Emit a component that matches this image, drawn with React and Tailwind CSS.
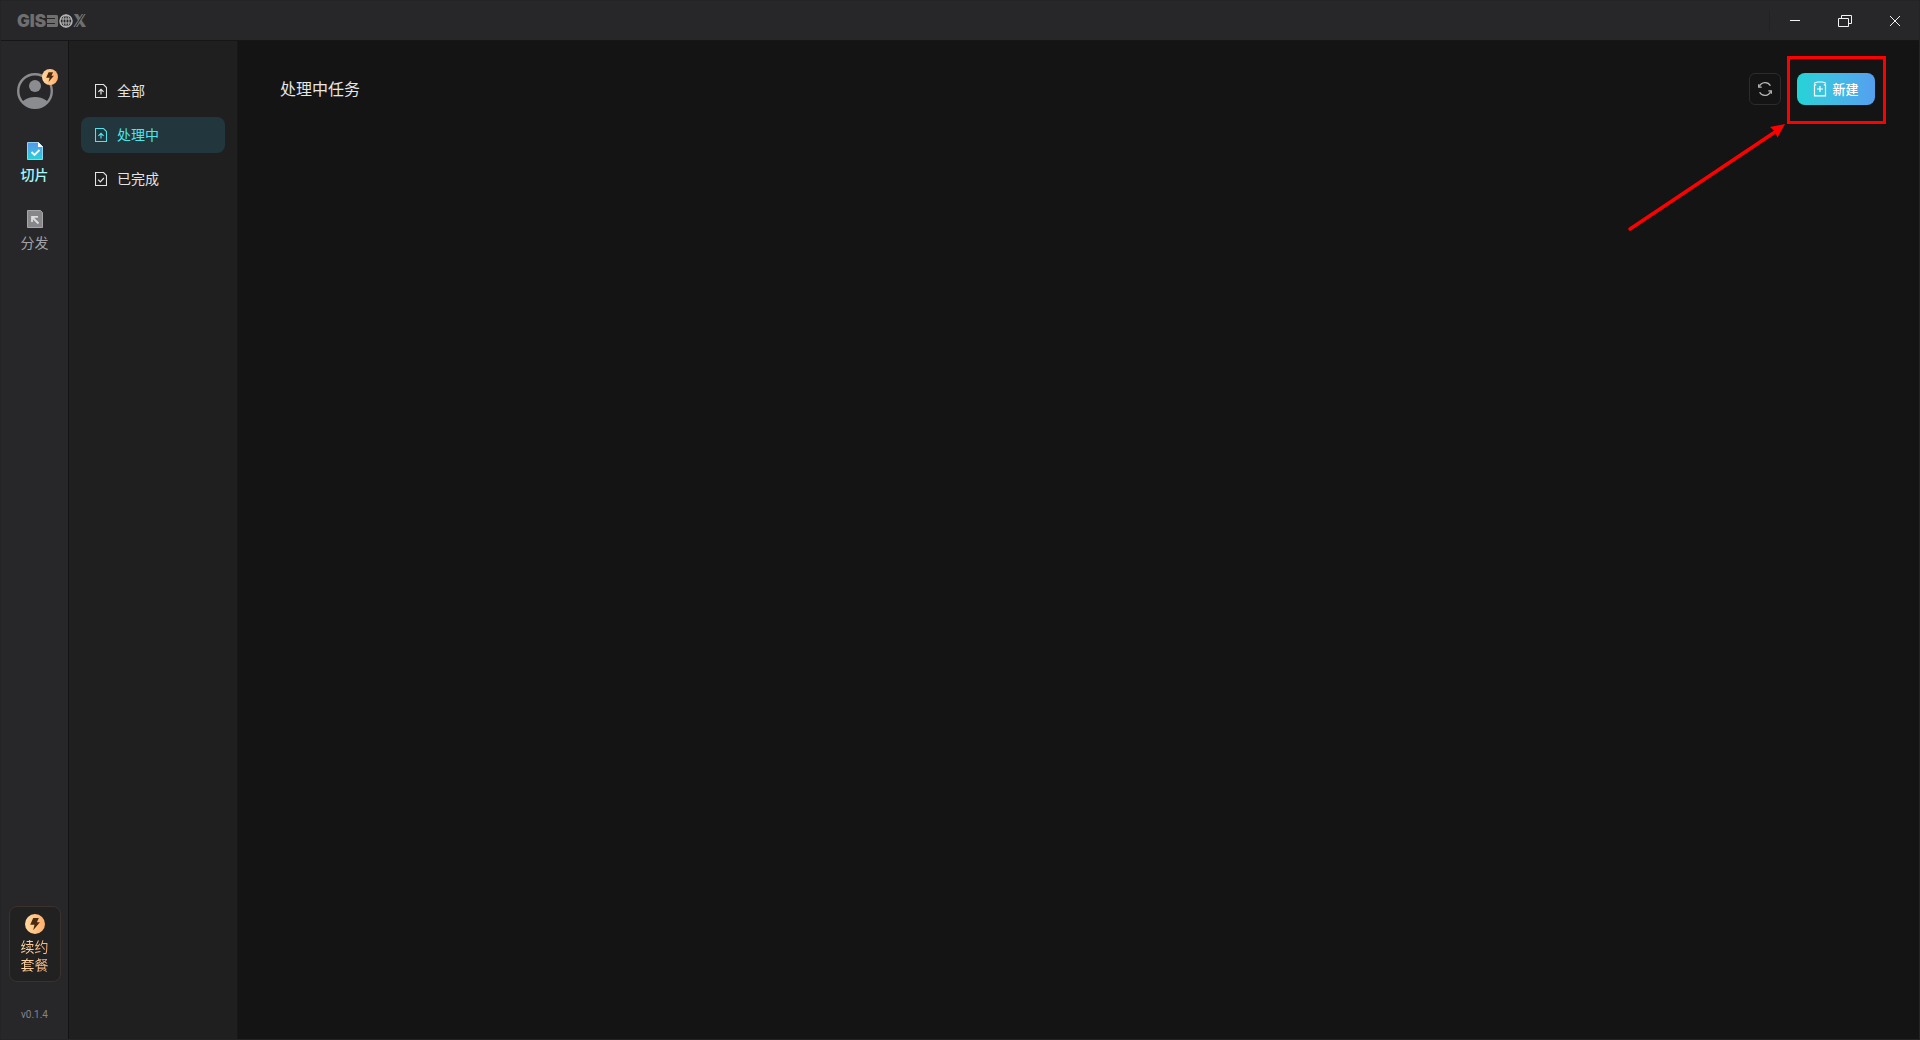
import React from "react";

function GlobeMark() {
  return (
    <svg width="14" height="14" viewBox="0 0 14 14" fill="none" stroke="#b4b4b4" aria-hidden="true">
      <circle cx="7" cy="7" r="6" strokeWidth="1.5" />
      <ellipse cx="7" cy="7" rx="3" ry="6" />
      <path d="M7 1v12M1 5h12M1 9h12" />
    </svg>
  );
}

function StackMark() {
  return (
    <span className="mx-px flex w-[11px] flex-col" aria-hidden="true">
      <span className="h-[7px] rounded-r-xs border-y-[3px] border-r-[3px] border-[#6f6f70]" />
      <span className="-mt-0.5 h-[7px] rounded-r-xs border-y-[3px] border-r-[3px] border-[#6f6f70]" />
    </span>
  );
}

function Logo() {
  return (
    <h1
      aria-label="GISBOX"
      className="flex items-center font-['Inter'] text-[17px] leading-5 font-black text-[#6f6f70]"
    >
      <span>GIS</span>
      <StackMark />
      <GlobeMark />
      <span className="relative">
        X
        <svg className="absolute inset-0 h-full w-full" viewBox="0 0 12 20" fill="none" aria-hidden="true">
          <path d="M1 17 10 3" stroke="#272729" strokeWidth="1" />
        </svg>
      </span>
    </h1>
  );
}

function Bolt({ className }) {
  return (
    <span
      className={
        "flex items-center justify-center rounded-full bg-linear-to-r from-[#ffd9a0] to-[#ffae6b] " + className
      }
    >
      <svg viewBox="0 0 20 20" className="h-full w-full" fill="#4a2a10" aria-hidden="true">
        <path d="M8.2 4h5.6l-1.9 4.3h3L8.2 16.2l1.3-5.4H5.2z" />
      </svg>
    </span>
  );
}

function Avatar() {
  return (
    <button aria-label="账户" className="relative size-9">
      <svg width="36" height="36" viewBox="0 0 36 36" aria-hidden="true">
        <clipPath id="avatar-clip">
          <circle cx="18" cy="18" r="17" />
        </clipPath>
        <circle cx="18" cy="13" r="6" fill="#8b8c90" />
        <ellipse cx="18" cy="34" rx="15" ry="10" fill="#8b8c90" clipPath="url(#avatar-clip)" />
        <circle cx="18" cy="18" r="16.8" fill="none" stroke="#8b8c90" strokeWidth="2.4" />
      </svg>
      <Bolt className="absolute -top-1 -right-[5px] size-4" />
    </button>
  );
}

function SliceIcon() {
  return (
    <svg width="16" height="18" viewBox="0 0 16 18" fill="none" aria-hidden="true">
      <defs>
        <linearGradient id="slice-fill" x1="0" y1="0" x2="0" y2="1">
          <stop offset="0" stopColor="#5a95ee" />
          <stop offset="1" stopColor="#25d3d8" />
        </linearGradient>
      </defs>
      <path d="M.5.5h11l4 4v13H.5z" fill="url(#slice-fill)" stroke="#8fd4f5" />
      <path d="M11 0v5h5z" fill="#fff" />
      <path d="m4.5 10 3 3 5-5" stroke="#fff" strokeWidth="1.8" />
    </svg>
  );
}

function ShareIcon() {
  return (
    <svg width="16" height="18" viewBox="0 0 16 18" fill="none" aria-hidden="true">
      <path d="M.5.5h13l2 2v15H.5z" fill="#87878a" stroke="#a6a6a9" />
      <path d="M11.5 13.5 5.5 7.5M5 12V6.8h6" stroke="#dcdcde" strokeWidth="1.8" />
    </svg>
  );
}

function FileIcon({ check }) {
  return (
    <svg width="12" height="14" viewBox="0 0 12 14" fill="none" stroke="currentColor" aria-hidden="true">
      <path d="M.5.5h8l3 3v10H.5z" strokeWidth="1.1" />
      {check ? (
        <path d="m3.2 7.6 2.1 2.2 3.6-3.8" strokeWidth="1.2" />
      ) : (
        <path d="M6 10.5V5.5M3.4 7.9 6 5.4l2.6 2.5" strokeWidth="1.2" />
      )}
    </svg>
  );
}

function RailItem({ label, icon, active }) {
  return (
    <button className="flex w-full flex-col items-center gap-1">
      {icon}
      <span className={active ? "text-sm leading-5 font-medium text-[#a5f7fb]" : "text-sm leading-5 text-[#a3a3a6]"}>
        {label}
      </span>
    </button>
  );
}

function Rail() {
  return (
    <nav className="flex w-[68px] shrink-0 flex-col items-center border-r border-[#131314] bg-[#272729] pt-8">
      <Avatar />
      <div className="mt-[33px] flex w-full flex-col gap-[26px]">
        <RailItem label="切片" icon={<SliceIcon />} active />
        <RailItem label="分发" icon={<ShareIcon />} />
      </div>
      <button className="mt-auto flex w-[52px] flex-col items-center gap-[3px] rounded-lg border border-[#3b322c] bg-[#212122] pt-[7px] pb-2">
        <Bolt className="size-5" />
        <span className="w-7 bg-linear-to-r from-[#ffdca8] to-[#f9ae72] bg-clip-text text-sm leading-[18px] text-transparent">
          续约套餐
        </span>
      </button>
      <span className="mt-6 mb-4 font-['Roboto'] text-[10px] leading-[17px] text-[#85858a]">v0.1.4</span>
    </nav>
  );
}

const filters = [
  { label: "全部" },
  { label: "处理中", active: true },
  { label: "已完成", check: true },
];

function FilterList() {
  return (
    <aside className="w-[169px] shrink-0 border-r border-[#181818] bg-[#1f1f1f] px-3 pt-8">
      <ul className="flex flex-col gap-2">
        {filters.map((f) => (
          <li key={f.label}>
            <button
              className={
                "flex h-9 w-full items-center gap-[10px] rounded-lg px-[14px] text-sm " +
                (f.active ? "bg-[#21363d] text-[#4de4ec]" : "text-[#e4e4e4]")
              }
            >
              <FileIcon check={f.check} />
              <span className="pb-0.5">{f.label}</span>
            </button>
          </li>
        ))}
      </ul>
    </aside>
  );
}

function WindowControls() {
  return (
    <div className="-mr-px flex h-full items-center text-[#f2f2f2]">
      <span className="h-5 w-px bg-[#222224]" />
      <button aria-label="最小化" className="flex h-full w-[50px] items-center justify-center">
        <svg width="10" height="10" viewBox="0 0 10 10" stroke="currentColor">
          <path d="M0 4.5h10" />
        </svg>
      </button>
      <button aria-label="还原" className="flex h-full w-[50px] items-center justify-center">
        <svg width="14" height="12" viewBox="0 0 14 12" fill="none" stroke="currentColor">
          <path d="M.5 3.5h10v8H.5zM3.5 3.5v-3h10v8h-3" />
        </svg>
      </button>
      <button aria-label="关闭" className="flex h-full w-[50px] items-center justify-center">
        <svg width="10" height="10" viewBox="0 0 10 10" stroke="currentColor">
          <path d="m0 0 10 10M10 0 0 10" />
        </svg>
      </button>
    </div>
  );
}

function RefreshIcon() {
  return (
    <svg width="14" height="14" viewBox="0 0 14 14" fill="none" stroke="#b8b8b8" strokeWidth="1.3" aria-hidden="true">
      <path d="M1.4 4.6A6.1 6.1 0 0 1 12.4 3.8M12.6 9.4A6.1 6.1 0 0 1 1.6 10.2" />
      <path d="M.7 2.2v3h3M13.3 11.8v-3h-3" />
    </svg>
  );
}

function NewIcon() {
  return (
    <svg width="14" height="16" viewBox="0 0 14 16" fill="none" stroke="#fff" strokeWidth="1.2" aria-hidden="true">
      <path d="M1 2.2 4.5 1h5L13 2.2" />
      <path d="M3.2 3.8H1.5v11h11v-11h-1.700M7 5v6M4 8h6" />
    </svg>
  );
}

function Highlight() {
  return (
    <>
      <div className="pointer-events-none absolute -top-[17px] -right-[11px] -bottom-[19px] -left-[10px] border-3 border-[#ff0000]" />
      <svg
        className="pointer-events-none absolute top-[50px] right-[89px]"
        width="160"
        height="110"
        viewBox="0 0 160 110"
        aria-hidden="true"
      >
        <path d="M4 106 149 9" stroke="#ff0000" strokeWidth="3.4" strokeLinecap="round" />
        <path d="M159 1 144 4l4 3.5 3.5 7z" fill="#ff0000" />
      </svg>
    </>
  );
}

export default function App() {
  return (
    <div className="flex min-h-screen flex-col border border-[#242426] bg-[#141414] font-['Noto_Sans_CJK_SC',sans-serif]">
      <header className="flex h-10 items-center justify-between border-b border-[#161617] bg-[#272729] pl-4">
        <Logo />
        <WindowControls />
      </header>
      <div className="flex grow">
        <Rail />
        <FilterList />
        <main className="grow pt-8 pr-11 pl-[42px]">
          <div className="flex items-center justify-between">
            <h2 className="pb-0.5 text-base leading-7 text-[#e6e6e6]">处理中任务</h2>
            <div className="flex gap-4">
              <button
                aria-label="刷新"
                className="flex size-8 items-center justify-center rounded-md border border-[#2c2c2c]"
              >
                <RefreshIcon />
              </button>
              <div className="relative">
                <button className="flex h-8 w-[78px] items-center justify-center gap-[5px] rounded-lg bg-linear-to-r from-[#22d3d6] to-[#549ff0] text-[13px] font-medium text-white">
                  <NewIcon />
                  新建
                </button>
                <Highlight />
              </div>
            </div>
          </div>
        </main>
      </div>
    </div>
  );
}
